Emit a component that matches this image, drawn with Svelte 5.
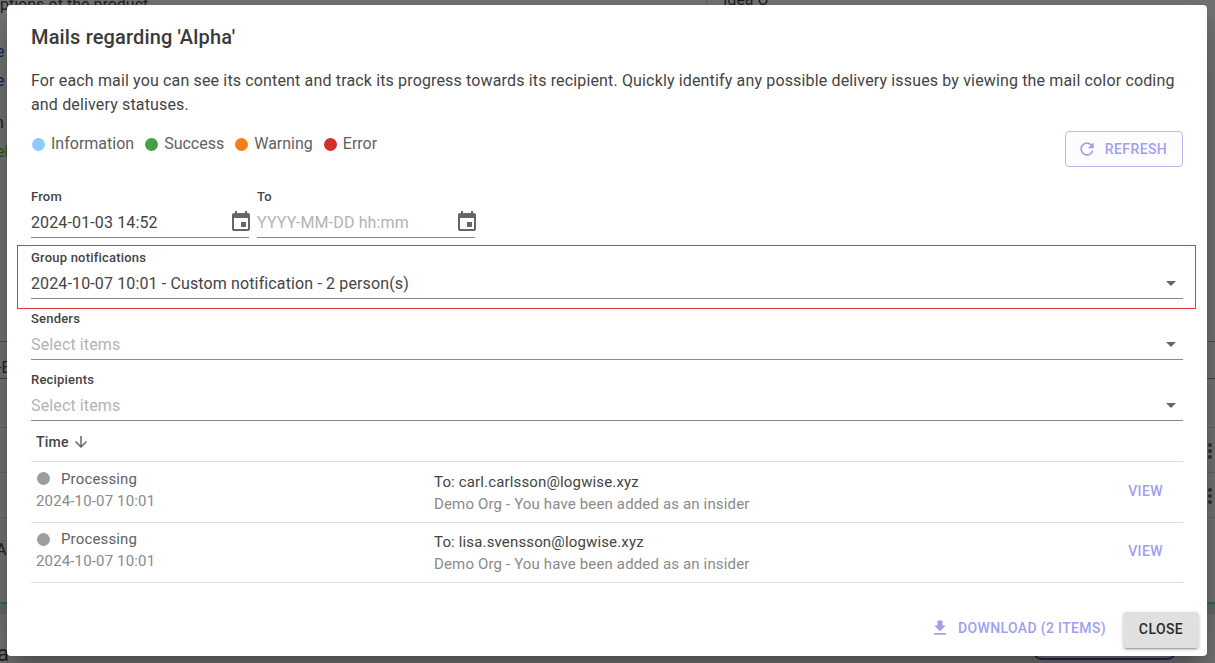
<script lang="ts">
  const legend = [
    { label: "Information", color: "#90caf9" },
    { label: "Success", color: "#43a047" },
    { label: "Warning", color: "#f57f17" },
    { label: "Error", color: "#d32f2f" }
  ];
  const selects = [
    { label: "Senders", value: "" },
    { label: "Recipients", value: "" }
  ];
  const mails = [
    { to: "carl.carlsson@logwise.xyz" },
    { to: "lisa.svensson@logwise.xyz" }
  ];
  // row separators of the page that lies behind the dialog
  const behindLines = [427, 472, 517];
</script>

<div class="page">
  <div class="behind" aria-hidden="true">
    <span class="bit" style="left:0;top:-7px">ptions of the product</span>
    <span class="bit" style="left:723px;top:-12px">Idea O</span>
    <span class="bit blue" style="left:-4px;top:40px">e</span>
    <span class="bit blue" style="left:-4px;top:69px">e</span>
    <span class="bit" style="left:-5px;top:111px">n</span>
    <span class="bit green" style="left:-4px;top:140px">el</span>
    <span class="bit" style="left:-3px;top:356px">-E</span>
    <span class="bit" style="left:-4px;top:538px">AI</span>
    <span class="bit big" style="left:-3px;top:642px">a</span>
    <span class="rule-v"></span>
    <span class="rule purple"></span>
    <span class="rule dark-r"></span>
    {#each behindLines as y}
      <span class="rule faint" style="top:{y}px"></span>
    {/each}
    <span class="band"></span>
    <span class="pill"></span>
    <span class="dots" style="top:443px"></span>
    <span class="dots" style="top:488px"></span>
  </div>

  <div class="dialog">
    <h2>Mails regarding 'Alpha'</h2>
    <p class="intro">For each mail you can see its content and track its progress towards its recipient. Quickly identify any possible delivery issues by viewing the mail color coding and delivery statuses.</p>

    <div class="legend-row">
      <div class="legend">
        {#each legend as item}
          <span class="legend-item"><i class="dot" style="background:{item.color}"></i>{item.label}</span>
        {/each}
      </div>
      <button class="refresh">
        <svg viewBox="0 0 24 24" width="20" height="20"><path fill="currentColor" d="M17.65 6.35A7.958 7.958 0 0 0 12 4c-4.42 0-7.99 3.58-7.99 8s3.57 8 7.99 8c3.73 0 6.84-2.55 7.73-6h-2.08A5.99 5.99 0 0 1 12 18c-3.31 0-6-2.69-6-6s2.69-6 6-6c1.66 0 3.14.69 4.22 1.78L13 11h7V4l-2.35 2.35z"/></svg>
        Refresh
      </button>
    </div>

    <div class="dates">
      <div class="field date">
        <span class="label">From</span>
        <div class="control">
          <span class="value">2024-01-03 14:52</span>
          <svg class="cal" viewBox="0 0 24 24" width="24" height="24"><path fill="currentColor" d="M17 12h-5v5h5v-5zM16 1v2H8V1H6v2H5c-1.11 0-1.99.9-1.99 2L3 19c0 1.1.89 2 2 2h14c1.1 0 2-.9 2-2V5c0-1.1-.9-2-2-2h-1V1h-2zm3 18H5V8h14v11z"/></svg>
        </div>
      </div>
      <div class="field date">
        <span class="label">To</span>
        <div class="control">
          <span class="value empty">YYYY-MM-DD hh:mm</span>
          <svg class="cal" viewBox="0 0 24 24" width="24" height="24"><path fill="currentColor" d="M17 12h-5v5h5v-5zM16 1v2H8V1H6v2H5c-1.11 0-1.99.9-1.99 2L3 19c0 1.1.89 2 2 2h14c1.1 0 2-.9 2-2V5c0-1.1-.9-2-2-2h-1V1h-2zm3 18H5V8h14v11z"/></svg>
        </div>
      </div>
    </div>

    <div class="highlight">
      <div class="field">
        <span class="label">Group notifications</span>
        <div class="control">
          <span class="value">2024-10-07 10:01 - Custom notification - 2 person(s)</span>
          <svg class="caret" viewBox="0 0 24 24" width="24" height="24"><path fill="currentColor" d="M7 10l5 5 5-5z"/></svg>
        </div>
      </div>
    </div>

    {#each selects as sel}
      <div class="field select">
        <span class="label">{sel.label}</span>
        <div class="control">
          <span class="value empty">Select items</span>
          <svg class="caret" viewBox="0 0 24 24" width="24" height="24"><path fill="currentColor" d="M7 10l5 5 5-5z"/></svg>
        </div>
      </div>
    {/each}

    <div class="table">
      <div class="thead">
        Time
        <svg viewBox="0 0 24 24" width="18" height="18"><path fill="currentColor" d="M20 12l-1.41-1.41L13 16.17V4h-2v12.17l-5.58-5.59L4 12l8 8 8-8z"/></svg>
      </div>
      {#each mails as mail}
        <div class="row">
          <div class="status">
            <div class="state"><i class="dot grey"></i>Processing</div>
            <div class="muted">2024-10-07 10:01</div>
          </div>
          <div class="mail">
            <div class="to">To: {mail.to}</div>
            <div class="muted">Demo Org - You have been added as an insider</div>
          </div>
          <button class="view">View</button>
        </div>
      {/each}
    </div>

    <div class="actions">
      <button class="download">
        <svg viewBox="0 0 24 24" width="20" height="20"><path fill="currentColor" d="M19 9h-4V3H9v6H5l7 7 7-7zM5 18v2h14v-2H5z"/></svg>
        Download (2 items)
      </button>
      <button class="close">Close</button>
    </div>
  </div>
</div>

<style>
  :global(body) {
    margin: 0;
    font-family: Roboto, "Liberation Sans", sans-serif;
  }
  .page {
    position: relative;
    width: 1215px;
    height: 663px;
    overflow: hidden;
    background: #767676;
    box-sizing: border-box;
    padding: 5px 8px 7px 7px;
  }
  .behind {
    position: absolute;
    inset: 0;
    color: #222;
    font-size: 16px;
  }
  .bit { position: absolute; line-height: 24px; white-space: nowrap; }
  .bit.blue { color: #0d2b66; }
  .bit.green { color: #2f5a10; }
  .bit.big { font-size: 22px; }
  .rule-v {
    position: absolute;
    left: 706px;
    top: 0;
    width: 1px;
    height: 5px;
    background: #666;
  }
  .rule {
    position: absolute;
    left: 0;
    width: 100%;
    height: 1px;
  }
  .rule.faint { background: #666; }
  .rule.purple { top: 341px; background: #4d4a80; }
  .rule.dark-r { top: 378px; background: #444; }
  .band {
    position: absolute;
    left: 0;
    top: 602px;
    width: 100%;
    height: 12px;
    box-sizing: border-box;
    border-top: 2px solid #1d7a3a;
    background: #6a6a6a;
  }
  .pill {
    position: absolute;
    left: 1032px;
    top: 640px;
    width: 145px;
    height: 20px;
    border: 2px solid #2d2466;
    border-radius: 12px;
    box-sizing: border-box;
  }
  .dots {
    position: absolute;
    left: 1208px;
    width: 4px;
    height: 4px;
    border-radius: 50%;
    background: #333;
    box-shadow: 0 6px 0 #333, 0 12px 0 #333;
  }
  .dialog {
    position: relative;
    height: 651px;
    box-sizing: border-box;
    background: #fff;
    border-radius: 4px;
    padding: 0 24px;
    color: #333;
    box-shadow: 0 11px 15px -7px rgba(0, 0, 0, .2), 0 24px 38px 3px rgba(0, 0, 0, .14), 0 9px 46px 8px rgba(0, 0, 0, .12);
    display: flex;
    flex-direction: column;
  }
  h2 {
    margin: 0;
    padding-top: 16px;
    font-size: 20px;
    font-weight: 500;
    line-height: 32px;
    letter-spacing: .15px;
    color: #3a3a3a;
  }
  .intro {
    margin: 16px 0 0;
    font-size: 16px;
    line-height: 24px;
    letter-spacing: .15px;
    color: #444;
  }
  .legend-row {
    display: flex;
    justify-content: space-between;
    align-items: flex-start;
    margin-top: 15px;
    height: 47px;
  }
  .legend {
    display: flex;
    gap: 11px;
    padding-left: 1px;
    font-size: 16px;
    line-height: 24px;
    letter-spacing: 0;
    color: #616161;
  }
  .legend-item { display: flex; align-items: center; }
  .dot {
    display: inline-block;
    width: 13px;
    height: 13px;
    border-radius: 50%;
    margin-right: 6px;
  }
  button {
    font-family: inherit;
    font-size: 14px;
    font-weight: 500;
    letter-spacing: .4px;
    text-transform: uppercase;
    border: none;
    background: none;
    cursor: pointer;
  }
  .refresh {
    display: flex;
    align-items: center;
    justify-content: center;
    gap: 8px;
    width: 118px;
    height: 36px;
    margin-top: -1px;
    padding: 0 4px 0 0;
    color: #a19ef0;
    border: 1px solid #bcb9f5;
    border-radius: 4px;
    background: #fdfdff;
  }
  .dates {
    display: flex;
    gap: 8px;
    margin-top: 10px;
  }
  .date { width: 218px; }
  .field { display: flex; flex-direction: column; }
  .label {
    font-size: 13px;
    font-weight: 500;
    line-height: 16px;
    letter-spacing: .2px;
    color: #444;
  }
  .control {
    display: flex;
    align-items: center;
    justify-content: space-between;
    height: 30px;
    padding-top: 2px;
    border-bottom: 1px solid #8a8a8a;
    font-size: 16px;
    letter-spacing: .13px;
  }
  .value { color: #444; }
  .value.empty { color: #b3b3b3; }
  .cal { color: #666; margin-right: -4px; flex: none; }
  .caret { color: #666; flex: none; }
  .highlight {
    margin: 7px -13px 0 -14px;
    padding: 4px 12px 9px 13px;
    border: 1px solid #e53935;
  }
  .select { margin-top: 12px; }
  .highlight + .select { margin-top: 2px; }
  .thead {
    display: flex;
    align-items: center;
    gap: 3px;
    height: 39px;
    padding: 1px 0 0 5px;
    font-size: 14px;
    font-weight: 500;
    letter-spacing: .2px;
    border-bottom: 1px solid #e0e0e0;
    color: #444;
  }
  .thead svg { color: #666; }
  .row {
    display: flex;
    align-items: center;
    box-sizing: border-box;
    height: 60.5px;
    border-bottom: 1px solid #e0e0e0;
    font-size: 15px;
    letter-spacing: .15px;
    line-height: 22px;
  }
  .status { width: 403px; padding: 0 0 4px 5px; box-sizing: border-box; }
  .state { display: flex; align-items: center; color: #616161; }
  .dot.grey { background: #9e9e9e; margin: 0 11px 0 1px; }
  .mail { flex: 1; padding-top: 2px; }
  .to { color: #444; }
  .muted { color: #8a8a8a; }
  .view {
    padding: 0 0 2px;
    margin-right: 20px;
    color: #a19ef0;
  }
  .actions {
    display: flex;
    justify-content: flex-end;
    align-items: center;
    gap: 17px;
    margin-top: auto;
    margin-right: -16px;
    padding-bottom: 8px;
  }
  .download {
    display: flex;
    align-items: center;
    gap: 8px;
    padding: 0 0 4px;
    letter-spacing: .35px;
    color: #a19ef0;
  }
  .close {
    width: 76px;
    height: 36px;
    padding: 0 0 3px;
    background: #e0e0e0;
    color: #2a2a2a;
    border-radius: 4px;
    box-shadow: 0 3px 1px -2px rgba(0, 0, 0, .2), 0 2px 2px 0 rgba(0, 0, 0, .14), 0 1px 5px 0 rgba(0, 0, 0, .12);
  }
</style>
